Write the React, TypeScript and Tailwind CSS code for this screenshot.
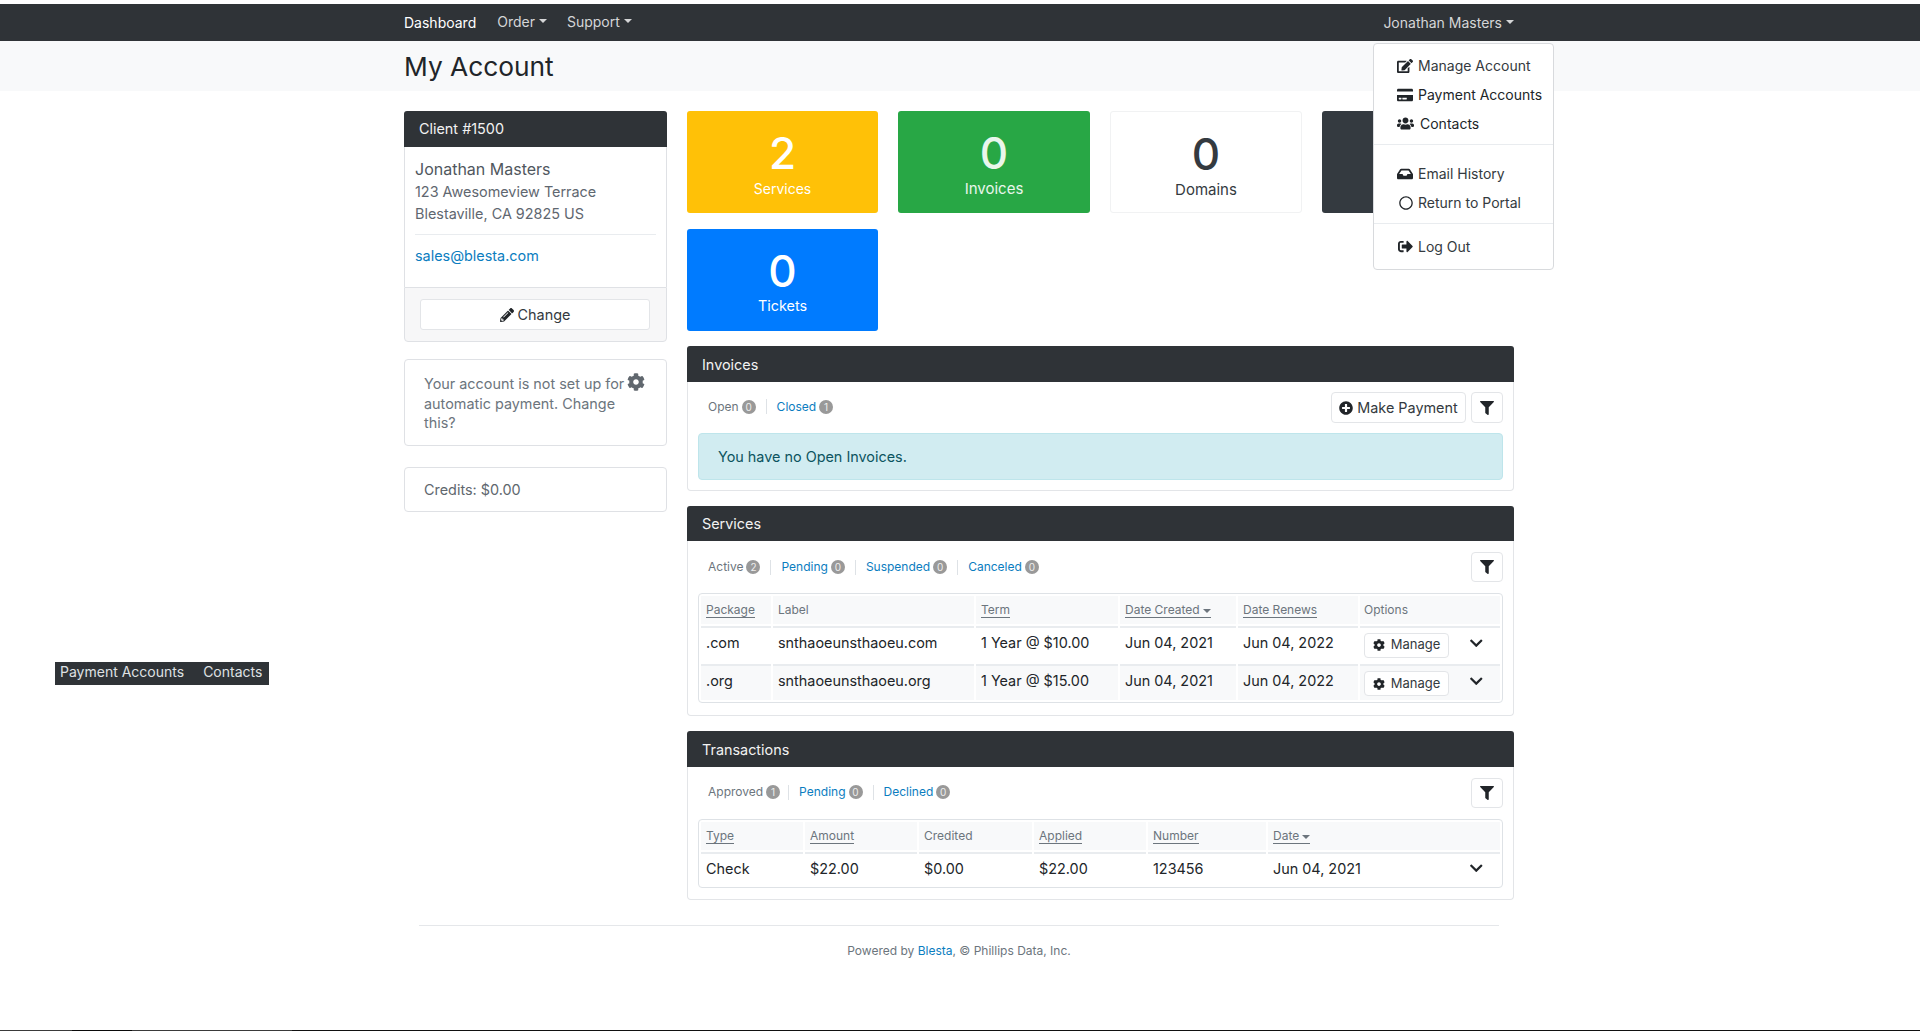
import React from "react";
import {
  FaEdit,
  FaCreditCard,
  FaUsers,
  FaInbox,
  FaRegCircle,
  FaSignOutAlt,
  FaPencilAlt,
  FaCog,
  FaPlusCircle,
  FaFilter,
  FaChevronDown,
} from "react-icons/fa";

function Caret({ className }: { className: string }) {
  return <span className={`inline-block border-x-[4px] border-t-[4px] border-x-transparent ${className}`} />;
}

function NavLink({ label, active, caret, className }: { label: string; active?: boolean; caret?: boolean; className?: string }) {
  return (
    <a className={`flex items-center text-sm ${active ? "text-white" : "text-[#d5d6d7]"} ${className ?? ""}`}>
      {label}
      {caret && <Caret className="mb-[2px] ml-1 border-t-[#d5d6d7]" />}
    </a>
  );
}

function Tile({ n, label, className, labelClass }: { n?: string; label?: string; className: string; labelClass?: string }) {
  return (
    <div className={`flex h-[102px] flex-col items-center rounded-[3px] pt-5 ${className}`}>
      {n && <div className="text-[44px] leading-[44px] font-medium">{n}</div>}
      {label && <div className={`leading-5 ${labelClass ?? ""}`}>{label}</div>}
    </div>
  );
}

function Badge({ n }: { n: string }) {
  return (
    <span className="ml-[3px] inline-flex h-[14px] w-[14px] items-center justify-center rounded-full bg-[#999] text-[10px] leading-none text-[#eee]">
      {n}
    </span>
  );
}

function Filters({ items, className, tight }: { items: [string, string][]; className: string; tight?: boolean }) {
  return (
    <div className={`flex items-center pl-[10px] text-xs ${className}`}>
      {items.map(([label, n], i) => (
        <div key={label} className="flex items-center">
          {i > 0 && <span className={`mr-[10px] h-[15px] w-px bg-[#dee2e6] ${tight && i === 1 ? "ml-2" : "ml-[10px]"}`} />}
          <a className={i === 0 ? "text-[#6c757d]" : "text-[#0b7dc0]"}>{label}</a>
          <Badge n={n} />
        </div>
      ))}
    </div>
  );
}

function FilterButton({ h = "h-[30px]" }: { h?: string }) {
  return (
    <button className={`ml-[5px] flex ${h} w-8 items-center justify-center rounded-[4px] border border-[#e3e5e8] bg-white text-[#212529]`}>
      <FaFilter className="text-[14px]" />
    </button>
  );
}

function Panel({ title, headerH, children, className }: { title: string; headerH: string; children: React.ReactNode; className: string }) {
  return (
    <section className={className}>
      <div className={`flex ${headerH} items-center rounded-t-[3px] bg-[#2f3337] pt-px pl-[15px] text-[14.4px] text-[#f2f2f2]`}>{title}</div>
      <div className="rounded-b-[4px] border-x border-b border-[#e3e5e8] bg-white px-[10px]">{children}</div>
    </section>
  );
}

function Sort({ label, caret }: { label: string; caret?: boolean }) {
  return (
    <a className="inline-block border-b border-[#6c757d] text-[#6c757d] leading-[14px]">
      {label}
      {caret && <Caret className="mb-[1px] ml-[3px] border-t-[#6c757d]" />}
    </a>
  );
}

const th = "h-[28px] bg-[#f8f9fa] px-[5px] text-left text-xs font-normal text-[#6c757d] align-middle";

function Chevron() {
  return <FaChevronDown className="text-[14.5px] text-[#212529]" />;
}

function ManageCell({ low }: { low?: boolean }) {
  return (
    <div className="flex items-center">
      <button className={`ml-[-1px] flex h-[25px] w-[85px] items-center justify-center gap-[6px] rounded-[4px] border border-[#e3e5e8] bg-white text-[13px] text-[#343a40] ${low ? "mt-px" : ""}`}>
        <FaCog className="text-[12px] text-[#212529]" />
        Manage
      </button>
      <span className="mb-1 ml-5">
        <Chevron />
      </span>
    </div>
  );
}

function ServiceRow({ cells, striped }: { cells: string[]; striped?: boolean }) {
  const td = `h-[36px] border-t-2 border-[#e9ecef] px-[5px] pb-1 text-[14.4px] text-[#212529] align-middle ${striped ? "bg-[#f8f9fa]" : ""}`;
  return (
    <tr>
      {cells.map((c) => (
        <td key={c} className={td}>
          {c}
        </td>
      ))}
      <td className={`h-[36px] border-t-2 border-[#e9ecef] px-[5px] align-middle ${striped ? "bg-[#f8f9fa]" : ""}`}>
        <ManageCell low={striped} />
      </td>
    </tr>
  );
}

function MenuItem({ icon, label, w, dark }: { icon: React.ReactNode; label: string; w: string; dark?: boolean }) {
  return (
    <a className={`flex h-[29px] items-center pl-[23px] text-sm ${dark ? "text-[#212529]" : "text-[#343a40]"}`}>
      <span className={`flex ${w} shrink-0 items-center text-[#212529]`}>{icon}</span>
      {label}
    </a>
  );
}

export default function App() {
  const td = "h-[33px] border-t-2 border-[#e9ecef] px-[5px] pb-[2px] text-[14.4px] text-[#212529] align-middle";
  return (
    <div className="relative flex h-[1031px] flex-col overflow-hidden bg-white pt-1 font-['Inter','Noto_Sans',sans-serif]">
      {/* navbar */}
      <nav className="h-[37px] shrink-0 bg-[#2f3337]">
        <div className="ml-[404px] flex h-full w-[1110px] items-center">
          <NavLink label="Dashboard" active className="pt-[1px]" />
          <NavLink label="Order" caret className="ml-[21px] mb-[1px]" />
          <NavLink label="Support" caret className="ml-5 mb-[1px]" />
          <NavLink label="Jonathan Masters" caret className="ml-auto pt-[1px]" />
        </div>
      </nav>

      {/* title */}
      <div className="h-[50px] shrink-0 bg-[#f8f9fa] pt-px">
        <h1 className="ml-[404px] text-[26.3px] leading-[50px] font-normal text-[#212529]">My Account</h1>
      </div>

      {/* content */}
      <main className="mt-5 ml-[404px] flex w-[1110px] gap-5">
        <aside className="w-[263px] shrink-0">
          <div className="flex h-9 items-center rounded-t-[3px] bg-[#2f3337] pl-[15px] text-[14.4px] text-[#f2f2f2]">Client #1500</div>
          <div className="border-x border-[#dfe1e5] bg-white px-[10px] pt-[10px] pb-5">
            <div className="text-base leading-6 text-[#50575e]">Jonathan Masters</div>
            <div className="text-[14.4px] leading-[22px] text-[#5f6770]">123 Awesomeview Terrace</div>
            <div className="text-[14.4px] leading-[22px] text-[#5f6770]">Blestaville, CA 92825 US</div>
            <div className="mt-[9px] border-t border-[#e9ecef]" />
            <a className="mt-[10px] block text-[14.4px] leading-[22px] text-[#0b7dc0]">sales@blesta.com</a>
          </div>
          <div className="h-[55px] rounded-b-[4px] border border-[#dfe1e5] bg-[#f7f7f8] pt-[11px] pr-4 pl-[15px]">
            <button className="flex h-[31px] w-full items-center justify-center gap-[4px] rounded-[3px] border border-[#e3e5e8] bg-white text-[14.4px] text-[#343a40]">
              <FaPencilAlt className="text-[14px] text-[#212529]" />
              Change
            </button>
          </div>

          <div className="mt-[17px] h-[87px] rounded-[4px] border border-[#dfe1e5] bg-white py-[14px] pr-[18px] pl-[19px] text-[14.4px] leading-[19px] text-[#6c757d]">
            Your account is not set up for
            <FaCog className="relative -top-[3px] ml-[3px] inline-block align-middle text-[18px] text-[#60676e]" />{" "}
            automatic payment. Change this?
          </div>

          <div className="mt-[21px] flex h-[45px] items-center rounded-[4px] border border-[#dfe1e5] bg-white pl-[19px] text-[14.4px] text-[#60676e]">
            Credits: $0.00
          </div>
        </aside>

        <div className="w-[827px] shrink-0">
          <div className="grid grid-cols-[191px_192px_192px_192px] gap-x-5 gap-y-4">
            <Tile n="2" label="Services" labelClass="mt-1 text-sm" className="bg-[#ffc107] text-white" />
            <Tile n="0" label="Invoices" labelClass="mt-1 text-[15px]" className="bg-[#28a745] text-[#e9f6ec]" />
            <Tile n="0" label="Domains" labelClass="mt-1 text-[15px]" className="border border-[#f1f2f3] bg-white text-[#343a40]" />
            <Tile className="bg-[#343a40]" />
            <Tile n="0" label="Tickets" labelClass="mt-[3px] text-[14.4px]" className="bg-[#007bff] text-white" />
          </div>

          <Panel title="Invoices" headerH="h-9" className="mt-[15px]">
            <div className="flex items-center justify-between pt-[10px]">
              <Filters className="mb-[2px]" items={[["Open", "0"], ["Closed", "1"]]} />
              <div className="flex">
                <button className="flex h-[31px] w-[135px] items-center justify-center gap-[4px] rounded-[4px] border border-[#e3e5e8] bg-white text-[14.4px] text-[#343a40]">
                  <FaPlusCircle className="text-[14px] text-[#212529]" />
                  Make Payment
                </button>
                <FilterButton h="h-[31px]" />
              </div>
            </div>
            <div className="mt-[10px] mb-[10px] flex h-[47px] items-center rounded-[4px] border border-[#bee5eb] bg-[#d1ecf1] pl-[19px] text-[14.4px] text-[#0c5460]">
              You have no Open Invoices.
            </div>
          </Panel>

          <Panel title="Services" headerH="h-[35px]" className="mt-[15px]">
            <div className="flex items-center justify-between pt-[11px]">
              <Filters className="mb-0" items={[["Active", "2"], ["Pending", "0"], ["Suspended", "0"], ["Canceled", "0"]]} />
              <FilterButton />
            </div>
            <div className="mt-[11px] mb-3 rounded-[4px] border border-[#dee2e6]">
              <table className="w-full table-fixed border-separate border-spacing-[2px]">
                <colgroup>
                  <col className="w-[70px]" />
                  <col className="w-[201px]" />
                  <col className="w-[142px]" />
                  <col className="w-[116px]" />
                  <col className="w-[120px]" />
                  <col className="w-[140px]" />
                </colgroup>
                <thead>
                  <tr>
                    <th className={th}><Sort label="Package" /></th>
                    <th className={th}>Label</th>
                    <th className={th}><Sort label="Term" /></th>
                    <th className={th}><Sort label="Date Created" caret /></th>
                    <th className={th}><Sort label="Date Renews" /></th>
                    <th className={th}><span className="-ml-px inline-block">Options</span></th>
                  </tr>
                </thead>
                <tbody>
                  <ServiceRow cells={[".com", "snthaoeunsthaoeu.com", "1 Year @ $10.00", "Jun 04, 2021", "Jun 04, 2022"]} />
                  <ServiceRow striped cells={[".org", "snthaoeunsthaoeu.org", "1 Year @ $15.00", "Jun 04, 2021", "Jun 04, 2022"]} />
                </tbody>
              </table>
            </div>
          </Panel>

          <Panel title="Transactions" headerH="h-9" className="mt-[15px]">
            <div className="flex items-center justify-between pt-[11px]">
              <Filters className="mb-[2px]" tight items={[["Approved", "1"], ["Pending", "0"], ["Declined", "0"]]} />
              <FilterButton />
            </div>
            <div className="mt-[11px] mb-[11px] rounded-[4px] border border-[#dee2e6]">
              <table className="w-full table-fixed border-separate border-spacing-[2px]">
                <colgroup>
                  <col className="w-[102px]" />
                  <col className="w-[112px]" />
                  <col className="w-[113px]" />
                  <col className="w-[112px]" />
                  <col className="w-[118px]" />
                  <col className="w-[232px]" />
                </colgroup>
                <thead>
                  <tr>
                    <th className={th}><Sort label="Type" /></th>
                    <th className={th}><Sort label="Amount" /></th>
                    <th className={th}>Credited</th>
                    <th className={th}><Sort label="Applied" /></th>
                    <th className={th}><Sort label="Number" /></th>
                    <th className={th}><Sort label="Date" caret /></th>
                  </tr>
                </thead>
                <tbody>
                  <tr>
                    <td className={td}>Check</td>
                    <td className={td}>$22.00</td>
                    <td className={td}>$0.00</td>
                    <td className={td}>$22.00</td>
                    <td className={td}>123456</td>
                    <td className={td}>
                      <div className="flex items-center justify-between pr-3">
                        Jun 04, 2021
                        <span className="mb-[1px]">
                          <Chevron />
                        </span>
                      </div>
                    </td>
                  </tr>
                </tbody>
              </table>
            </div>
          </Panel>
        </div>
      </main>

      {/* footer */}
      <footer className="ml-[419px] mt-[25px] w-[1080px] border-t border-[#e5e7ea] pt-4 text-center text-xs leading-[18px] text-[#6c757d]">
        Powered by <a className="text-[#0b7dc0]">Blesta</a>, © Phillips Data, Inc.
      </footer>

      {/* bottom edge */}
      <div className="mt-auto flex h-px shrink-0">
        <span className="w-[72px] bg-[#3a3a3a]" />
        <span className="w-[60px] bg-[#0a0a0a]" />
        <span className="w-[160px] bg-[#3a3a3a]" />
        <span className="flex-1 bg-[#111]" />
      </div>

      {/* stray sub menu */}
      <div className="absolute top-[662px] left-[55px] flex h-[23px] w-[214px] items-center bg-[#2f3337] pb-[3px] pl-[5px] text-sm text-[#dfe1e3]">
        <span>Payment Accounts</span>
        <span className="ml-[19px]">Contacts</span>
      </div>

      {/* account dropdown */}
      <div className="absolute top-[43px] left-[1373px] w-[181px] rounded-[4px] border border-[#d8dadd] bg-white pt-[7px] pb-2">
        <MenuItem w="w-[21px]" label="Manage Account" icon={<FaEdit className="text-[16px]" />} />
        <MenuItem w="w-[21px]" dark label="Payment Accounts" icon={<FaCreditCard className="text-[16px]" />} />
        <MenuItem w="w-[23px]" dark label="Contacts" icon={<FaUsers className="text-[17px]" />} />
        <div className="mt-[6px] mb-[14px] border-t border-[#e9ecef]" />
        <MenuItem w="w-[21px]" label="Email History" icon={<FaInbox className="text-[16px]" />} />
        <MenuItem w="w-[21px]" label="Return to Portal" icon={<FaRegCircle className="ml-[2px] text-[14px]" />} />
        <div className="mt-[6px] mb-2 border-t border-[#e9ecef]" />
        <MenuItem w="w-[21px]" label="Log Out" icon={<FaSignOutAlt className="ml-[1px] text-[15px]" />} />
      </div>
    </div>
  );
}
